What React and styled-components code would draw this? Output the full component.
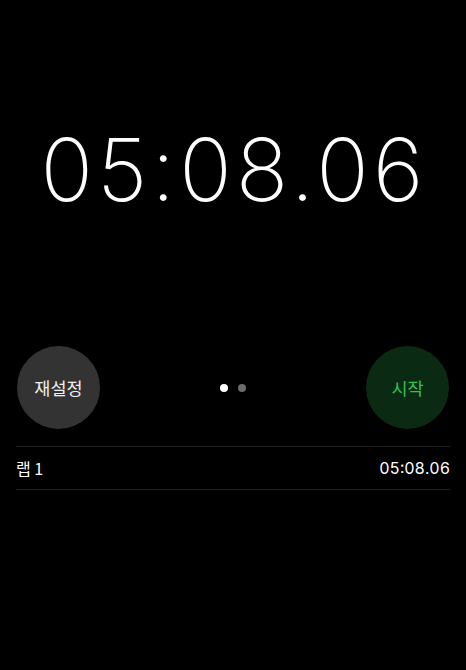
import React from "react";
import styled, { createGlobalStyle } from "styled-components";

const Global = createGlobalStyle`
  html, body { margin: 0; padding: 0; background: #000; }
  body { font-family: "Inter", "Noto Sans CJK KR", sans-serif; color: #fff; }
`;

const Screen = styled.div`
  width: 466px;
  height: 670px;
  background: #000;
  display: flex;
  flex-direction: column;
`;

const Display = styled.div`
  height: 346px;
  display: flex;
  justify-content: center;
  padding-top: 126px;
  box-sizing: border-box;
`;

const BigTime = styled.div`
  font-family: "Inter", sans-serif;
  font-weight: 200;
  font-size: 87px;
  line-height: 1;
  letter-spacing: 4px;
  color: #fff;
  height: 90px;
  margin-left: 2px;
`;

const Controls = styled.div`
  display: flex;
  align-items: center;
  justify-content: space-between;
  padding: 0 17px;
`;

const RoundButton = styled.button`
  width: 83px;
  height: 83px;
  border-radius: 50%;
  border: none;
  padding: 0;
  background: ${(p) => p.$bg};
  color: ${(p) => p.$fg};
  font-family: "Noto Sans CJK KR", sans-serif;
  font-size: 17.5px;
  display: flex;
  align-items: center;
  justify-content: center;
`;

const Dots = styled.div`
  display: flex;
  gap: 10px;
  align-items: center;
`;

const Dot = styled.span`
  width: 8px;
  height: 8px;
  border-radius: 50%;
  background: ${(p) => (p.$active ? "#fff" : "#6b6b6b")};
`;

const LapList = styled.div`
  margin: 17px 16px 0;
  border-top: 1px solid #1f1f1f;
`;

const LapRow = styled.div`
  height: 42px;
  display: flex;
  align-items: center;
  justify-content: space-between;
  border-bottom: 1px solid #1f1f1f;
  font-size: 16px;
  color: #fff;
`;

const LapLabel = styled.span`
  font-family: "Noto Sans CJK KR", sans-serif;
`;

const LapTime = styled.span`
  font-family: "Inter", sans-serif;
  font-variant-numeric: tabular-nums;
`;

export default function App() {
  return (
    <>
      <Global />
      <Screen>
        <Display>
          <BigTime>05:08.06</BigTime>
        </Display>
        <Controls>
          <RoundButton $bg="#333333" $fg="#f0f0f0">재설정</RoundButton>
          <Dots>
            <Dot $active />
            <Dot />
          </Dots>
          <RoundButton $bg="#0b2a13" $fg="#31c552">시작</RoundButton>
        </Controls>
        <LapList>
          <LapRow>
            <LapLabel>랩 1</LapLabel>
            <LapTime>05:08.06</LapTime>
          </LapRow>
        </LapList>
      </Screen>
    </>
  );
}
